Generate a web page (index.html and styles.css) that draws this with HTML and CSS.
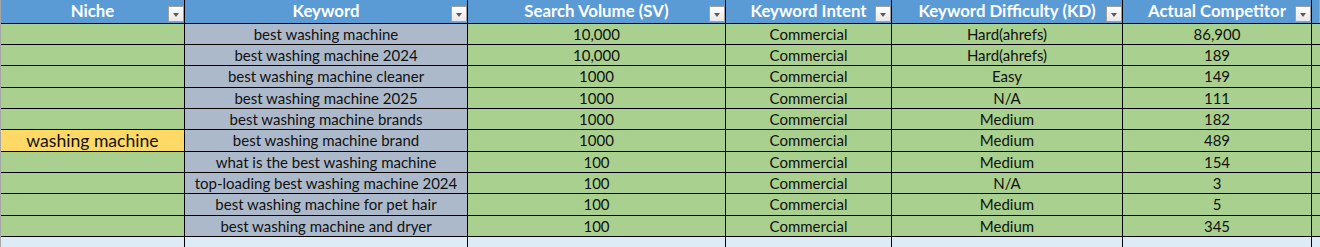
FILE: index.html
```html
<!DOCTYPE html>
<html>
<head>
<meta charset="utf-8">
<link rel="stylesheet" href="styles.css">
</head>
<body>
<div class="sheet">
  <div class="hd">Niche<span class="flt"></span></div>
  <div class="hd">Keyword<span class="flt"></span></div>
  <div class="hd">Search Volume (SV)<span class="flt"></span></div>
  <div class="hd">Keyword Intent<span class="flt"></span></div>
  <div class="hd">Keyword Difficulty (KD)<span class="flt"></span></div>
  <div class="hd">Actual Competitor<span class="flt"></span></div>
  <div class="hd edge"></div>

  <div class="c g"></div><div class="c k">best washing machine</div><div class="c g">10,000</div><div class="c g">Commercial</div><div class="c g">Hard(ahrefs)</div><div class="c g">86,900</div><div class="c g"></div>
  <div class="c g"></div><div class="c k">best washing machine 2024</div><div class="c g">10,000</div><div class="c g">Commercial</div><div class="c g">Hard(ahrefs)</div><div class="c g">189</div><div class="c g"></div>
  <div class="c g"></div><div class="c k">best washing machine cleaner</div><div class="c g">1000</div><div class="c g">Commercial</div><div class="c g">Easy</div><div class="c g">149</div><div class="c g"></div>
  <div class="c g"></div><div class="c k">best washing machine 2025</div><div class="c g">1000</div><div class="c g">Commercial</div><div class="c g">N/A</div><div class="c g">111</div><div class="c g"></div>
  <div class="c g"></div><div class="c k">best washing machine brands</div><div class="c g">1000</div><div class="c g">Commercial</div><div class="c g">Medium</div><div class="c g">182</div><div class="c g"></div>
  <div class="c y">washing machine</div><div class="c k">best washing machine brand</div><div class="c g">1000</div><div class="c g">Commercial</div><div class="c g">Medium</div><div class="c g">489</div><div class="c g"></div>
  <div class="c g"></div><div class="c k">what is the best washing machine</div><div class="c g">100</div><div class="c g">Commercial</div><div class="c g">Medium</div><div class="c g">154</div><div class="c g"></div>
  <div class="c g"></div><div class="c k">top-loading best washing machine 2024</div><div class="c g">100</div><div class="c g">Commercial</div><div class="c g">N/A</div><div class="c g">3</div><div class="c g"></div>
  <div class="c g"></div><div class="c k">best washing machine for pet hair</div><div class="c g">100</div><div class="c g">Commercial</div><div class="c g">Medium</div><div class="c g">5</div><div class="c g"></div>
  <div class="c g"></div><div class="c k">best washing machine and dryer</div><div class="c g">100</div><div class="c g">Commercial</div><div class="c g">Medium</div><div class="c g">345</div><div class="c g"></div>

  <div class="c b"></div><div class="c b"></div><div class="c b"></div><div class="c b"></div><div class="c b"></div><div class="c b"></div><div class="c b"></div>
</div>
</body>
</html>
```
FILE: styles.css
```css
html, body {
  margin: 0;
  padding: 0;
  background: #ddebf7;
  overflow: hidden;
}
.sheet {
  width: 1319px;
  height: 247px;
  border-left: 1px solid #a6a6a6;
  display: grid;
  grid-template-columns: 183px 282px 257px 165px 230px 188px 1fr;
  grid-template-rows: 22.67px repeat(10, 20.33px) 1fr;
  gap: 1px;
  background: #000;
  font-family: Lato, "Liberation Sans", sans-serif;
  font-size: 15px;
  color: #111;
}
.hd {
  position: relative;
  background: #5b9bd5;
  color: #fff;
  font-weight: bold;
  font-size: 16.8px;
  display: flex;
  align-items: center;
  justify-content: center;
  padding-bottom: 1px;
}
.hd.edge {
  border-right: 1px solid #a6a6a6;
}
.flt {
  position: absolute;
  right: 0;
  bottom: 1px;
  width: 14px;
  height: 14px;
  border: 1px solid #a0a0a0;
  background: linear-gradient(#ffffff, #e8e8e8);
}
.flt::after {
  content: "";
  position: absolute;
  left: 4px;
  top: 6px;
  border-left: 3.5px solid transparent;
  border-right: 3.5px solid transparent;
  border-top: 4px solid #5a5a5a;
}
.c {
  display: flex;
  align-items: center;
  justify-content: center;
  white-space: nowrap;
  overflow: hidden;
}
.g { background: #a9d08e; }
.k { background: #acb9ca; }
.y { background: #ffd966; font-size: 17.6px; }
.b { background: #ddebf7; }
```
